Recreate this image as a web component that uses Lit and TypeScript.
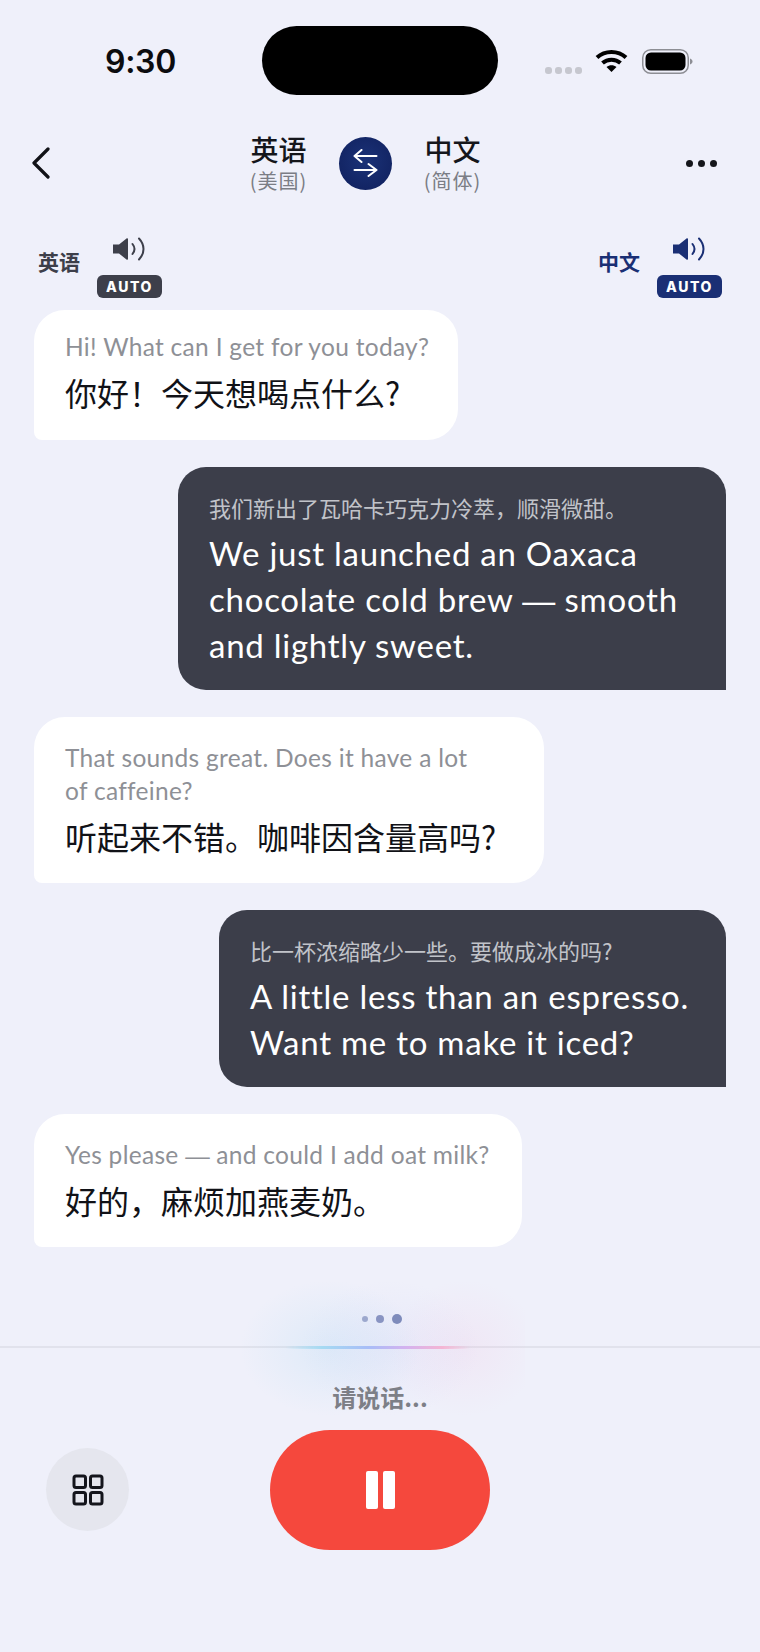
import { LitElement, css, html, svg } from "lit";
import { customElement } from "lit/decorators.js";

type Msg = { side: "in" | "out"; width: number; sub: string[]; main: string[] };

const MESSAGES: Msg[] = [
  { side: "in", width: 424, sub: ["Hi! What can I get for you today?"], main: ["你好！今天想喝点什么?"] },
  {
    side: "out",
    width: 548,
    sub: ["我们新出了瓦哈卡巧克力冷萃，顺滑微甜。"],
    main: ["We just launched an Oaxaca", "chocolate cold brew — smooth", "and lightly sweet."],
  },
  {
    side: "in",
    width: 510,
    sub: ["That sounds great. Does it have a lot", "of caffeine?"],
    main: ["听起来不错。咖啡因含量高吗?"],
  },
  {
    side: "out",
    width: 507,
    sub: ["比一杯浓缩略少一些。要做成冰的吗?"],
    main: ["A little less than an espresso.", "Want me to make it iced?"],
  },
  { side: "in", width: 488, sub: ["Yes please — and could I add oat milk?"], main: ["好的，麻烦加燕麦奶。"] },
];

const speaker = svg`
  <svg width="34" height="24" viewBox="0 0 34 24" fill="none">
    <path d="M0 7.500h6L13.500 1.500c.7-.5 1.500 0 1.500.8v19.400c0 .8-.8 1.300-1.500.8L6 16.500H0z" fill="currentColor"/>
    <path d="M19.500 7c2.400 3 2.400 7 0 10M26 1.500c6 6.500 6 14.500 0 21" stroke="currentColor" stroke-width="2" stroke-linecap="round"/>
  </svg>`;

// Lato's em dash is short, so it gets drawn in a font with a full-width one
const line = (text: string) => {
  const parts = text.split("—");
  return html`<span class="line">${parts[0]}${parts.length > 1
    ? html`<span class="dash">—</span>${parts[1]}`
    : ""}</span>`;
};

@customElement("app-root")
export class AppRoot extends LitElement {
  static styles = css`
    :host {
      display: block;
      width: 760px;
      height: 1652px;
      overflow: hidden;
      background: #eff0fa;
      font-family: "Noto Sans CJK SC", sans-serif;
      color: #111217;
    }

    .status {
      display: grid;
      grid-template-columns: 262px 236px 262px;
      padding-top: 26px;
      height: 69px;
    }
    .time {
      font: 600 32px/1 "Inter", sans-serif;
      padding: 20px 0 0 105px;
      color: #0c0c0f;
      letter-spacing: -0.3px;
    }
    .island {
      background: #000;
      border-radius: 35px;
      height: 69px;
    }
    .status-right {
      display: flex;
      align-items: flex-start;
      padding: 23px 0 0 47px;
    }
    .sig {
      display: flex;
      gap: 3px;
      margin: 18px 13px 0 0;
    }
    .sig i {
      width: 7px;
      height: 7px;
      border-radius: 3px;
      background: #c6c7cf;
    }
    .battery {
      margin-left: 14px;
    }

    .nav {
      display: grid;
      grid-template-columns: 219px auto 1fr;
      align-items: center;
      margin-top: 35px;
      height: 66px;
      padding: 0 43px 0 31px;
    }
    .nav-mid {
      display: flex;
      align-items: center;
      gap: 32px;
    }
    .lang {
      display: flex;
      flex-direction: column;
      align-items: center;
      width: 57px;
    }
    .lang b {
      font-size: 28px;
      line-height: 36px;
      font-weight: 500;
      color: #15161b;
    }
    .lang span {
      font-size: 20px;
      line-height: 28px;
      letter-spacing: 1px;
      white-space: nowrap;
      color: #7b7d85;
    }
    .swap {
      width: 53px;
      height: 53px;
      border-radius: 50%;
      background: radial-gradient(circle at 50% 45%, #1b3277, #0f1f5c);
      display: flex;
      align-items: center;
      justify-content: center;
    }
    .more {
      justify-self: end;
      display: flex;
      gap: 5px;
    }
    .more i {
      width: 7px;
      height: 7px;
      border-radius: 50%;
      background: #15161b;
    }

    .voices {
      display: flex;
      justify-content: space-between;
      margin-top: 41px;
      height: 64px;
      padding: 0 38px;
    }
    .voice {
      display: flex;
      gap: 17px;
      align-items: flex-start;
      color: #3d3f4a;
    }
    .voice.blue {
      color: #1a2f74;
    }
    .voice .name {
      font-size: 21px;
      line-height: 28px;
      font-weight: 600;
      margin-top: 10px;
    }
    .voice .ctl {
      display: flex;
      flex-direction: column;
      align-items: center;
      gap: 14px;
    }
    .auto {
      width: 65px;
      height: 23px;
      border-radius: 6px;
      background: currentColor;
      display: flex;
      align-items: center;
      justify-content: center;
    }
    .auto span {
      font: 800 14px/1 "Inter", sans-serif;
      letter-spacing: 1.6px;
      color: #fff;
    }

    .chat {
      display: flex;
      flex-direction: column;
      gap: 27px;
      margin-top: 9px;
      padding: 0 34px;
      height: 1036px;
    }
    .bubble {
      box-sizing: border-box;
      padding: 24px 0 24px 31px;
    }
    .bubble.in {
      align-self: flex-start;
      background: #fff;
      border-radius: 31px 31px 31px 8px;
      color: #111217;
    }
    .bubble.out {
      align-self: flex-end;
      background: #3c3e4a;
      border-radius: 28px 28px 0 28px;
      color: #fff;
      padding-bottom: 22px;
    }
    .bubble.first {
      padding: 20px 0 25px 31px;
    }
    .line {
      display: block;
      white-space: nowrap;
    }
    .dash {
      font-family: "Liberation Sans", sans-serif;
      letter-spacing: 0;
      line-height: 0;
    }
    .in .sub {
      font: 400 24.5px/33px "Lato", sans-serif;
      letter-spacing: 0.3px;
      color: #8e9096;
      margin-bottom: 6px;
    }
    .out .sub {
      font-size: 22px;
      line-height: 32px;
      color: #c1c3c9;
      margin-bottom: 7px;
    }
    .in .main {
      font-size: 32px;
      line-height: 46px;
    }
    .out .main {
      font: 400 33px/46px "Lato", sans-serif;
      letter-spacing: 0.75px;
    }

    .footer {
      position: relative;
      border-top: 2px solid #e1e2ec;
    }
    .glow {
      position: absolute;
      left: 225px;
      top: -68px;
      width: 300px;
      height: 136px;
      background:
        radial-gradient(ellipse 30% 50% at 35% 50%, rgba(140, 205, 240, 0.17), transparent),
        radial-gradient(ellipse 30% 50% at 55% 50%, rgba(170, 170, 240, 0.1), transparent),
        radial-gradient(ellipse 25% 50% at 80% 50%, rgba(245, 175, 215, 0.14), transparent);
    }
    .beam {
      position: absolute;
      left: 285px;
      top: -2px;
      width: 185px;
      height: 3px;
      background: linear-gradient(90deg, transparent, #a5daf2 20%, #a8bdf7 45%, #d3b2ef 65%, #f4b5d3 85%, transparent);
      filter: blur(0.6px);
    }
    .dots {
      position: absolute;
      top: -34px;
      left: 362px;
      display: flex;
      align-items: center;
      gap: 8px;
    }
    .dots i {
      border-radius: 50%;
      background: #7e8bbb;
    }
    .prompt {
      position: relative;
      text-align: center;
      font-size: 24px;
      line-height: 32px;
      font-weight: 700;
      color: #7d7f87;
      padding-top: 33px;
    }
    .controls {
      position: relative;
      display: flex;
      justify-content: center;
      margin-top: 17px;
    }
    .pause {
      width: 220px;
      height: 120px;
      border-radius: 60px;
      background: #f5483d;
      display: flex;
      align-items: center;
      justify-content: center;
      gap: 5px;
    }
    .pause i {
      width: 12px;
      height: 38px;
      border-radius: 2px;
      background: #fff;
    }
    .grid-btn {
      position: absolute;
      left: 46px;
      top: 18px;
      width: 83px;
      height: 83px;
      border-radius: 50%;
      background: #e5e6ee;
      display: flex;
      align-items: center;
      justify-content: center;
    }
  `;

  render() {
    return html`
      <div class="status">
        <div class="time">9:30</div>
        <div class="island"></div>
        <div class="status-right">
          <div class="sig"><i></i><i></i><i></i><i></i></div>
          <svg width="33" height="24" viewBox="0 0 32 24" fill="none" stroke="#000" stroke-width="4">
            <path d="M1.500 8.500C9.500 1 22.500 1 30.500 8.500"/>
            <path d="M7 14c5-4.500 13-4.500 18 0"/>
            <path d="M16 23l-5-5c3-2.400 7-2.400 10 0z" fill="#000" stroke="none"/>
          </svg>
          <svg class="battery" width="52" height="25" viewBox="0 0 52 25" fill="none">
            <rect x="0.750" y="0.750" width="45.500" height="23.500" rx="8" stroke="#8d8e94" stroke-width="1.500"/>
            <rect x="3.500" y="3.500" width="40" height="18" rx="5.500" fill="#000"/>
            <path d="M48 9.500c1.500.5 2.500 1.600 2.500 3s-1 2.500-2.500 3z" fill="#8d8e94"/>
          </svg>
        </div>
      </div>

      <div class="nav">
        <svg width="20" height="32" viewBox="0 0 20 32" fill="none" stroke="#111217" stroke-width="3.2" stroke-linecap="round" stroke-linejoin="round">
          <path d="M17 2L3 16l14 14"/>
        </svg>
        <div class="nav-mid">
          <div class="lang"><b>英语</b><span>(美国)</span></div>
          <div class="swap">
            <svg width="26" height="28" viewBox="0 0 26 28" fill="none" stroke="#fff" stroke-width="2" stroke-linecap="round" stroke-linejoin="round">
              <path d="M23.500 7H1.500M8.500 1L1.500 7l7 6M1.500 21h22M15.500 15l8 6-8 6"/>
            </svg>
          </div>
          <div class="lang"><b>中文</b><span>(简体)</span></div>
        </div>
        <div class="more"><i></i><i></i><i></i></div>
      </div>

      <div class="voices">
        <div class="voice">
          <div class="name">英语</div>
          <div class="ctl">${speaker}<div class="auto"><span>AUTO</span></div></div>
        </div>
        <div class="voice blue">
          <div class="name">中文</div>
          <div class="ctl">${speaker}<div class="auto"><span>AUTO</span></div></div>
        </div>
      </div>

      <div class="chat">
        ${MESSAGES.map(
          (m, i) => html`
            <div class="bubble ${m.side} ${i === 0 ? "first" : ""}" style="width:${m.width}px">
              <div class="sub">${m.sub.map(line)}</div>
              <div class="main">${m.main.map(line)}</div>
            </div>
          `
        )}
      </div>

      <div class="footer">
        <div class="glow"></div>
        <div class="beam"></div>
        <div class="dots">
          <i style="width:6px;height:6px;opacity:.7"></i>
          <i style="width:8px;height:8px;opacity:.9"></i>
          <i style="width:10px;height:10px"></i>
        </div>
        <div class="prompt">请说话...</div>
        <div class="controls">
          <div class="grid-btn">
            <svg width="32" height="32" viewBox="0 0 32 32" fill="none" stroke="#14151c" stroke-width="3">
              <rect x="2" y="2" width="11.500" height="11.500" rx="2"/>
              <rect x="18.500" y="2" width="11.500" height="11.500" rx="2"/>
              <rect x="2" y="18.500" width="11.500" height="11.500" rx="2"/>
              <rect x="18.500" y="18.500" width="11.500" height="11.500" rx="2"/>
            </svg>
          </div>
          <div class="pause"><i></i><i></i></div>
        </div>
      </div>
    `;
  }
}
